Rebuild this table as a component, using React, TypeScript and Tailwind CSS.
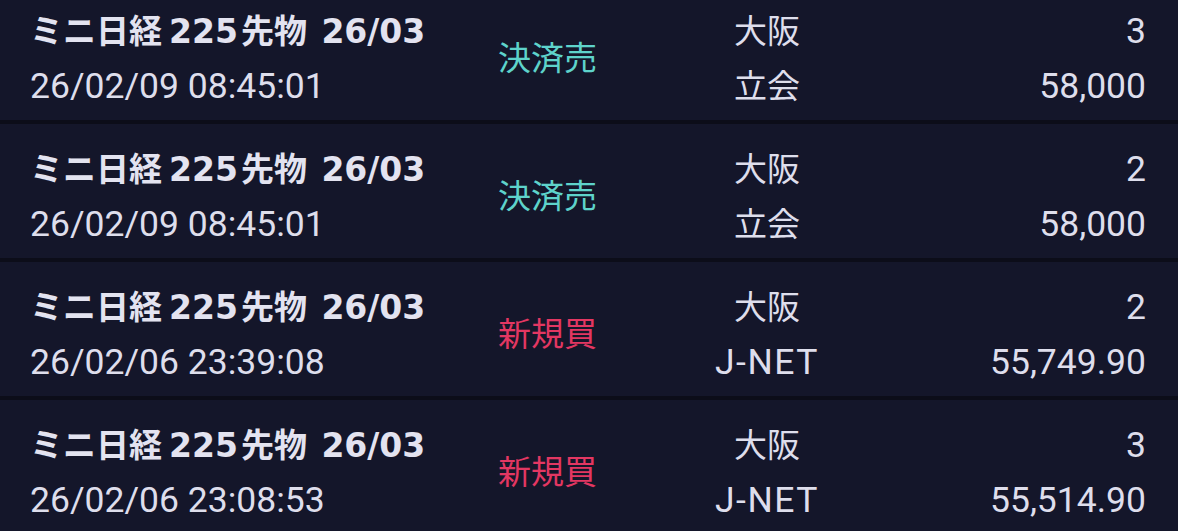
import React from 'react';

type Fill = {
    time: string;
    side: 'close-sell' | 'new-buy';
    market: string;
    session: string;
    qty: string;
    price: string;
};

const fills: Fill[] = [
    { time: '26/02/09 08:45:01', side: 'close-sell', market: '大阪', session: '立会', qty: '3', price: '58,000' },
    { time: '26/02/09 08:45:01', side: 'close-sell', market: '大阪', session: '立会', qty: '2', price: '58,000' },
    { time: '26/02/06 23:39:08', side: 'new-buy', market: '大阪', session: 'J-NET', qty: '2', price: '55,749.90' },
    { time: '26/02/06 23:08:53', side: 'new-buy', market: '大阪', session: 'J-NET', qty: '3', price: '55,514.90' },
];

// 銘柄名: 和文は Noto Sans CJK、数字は幅広の DejaVu Sans
const Title = () => (
    <div className="h-[55px] leading-[55px] font-bold text-[#e3e3f0] whitespace-nowrap">
        <span className="text-[33px]">ミニ日経</span>
        <span className="text-[33px] font-['DejaVu_Sans'] ml-[7px]">225</span>
        <span className="text-[33px] ml-[3px]">先物</span>
        <span className="text-[33px] font-['DejaVu_Sans'] ml-[3px]"> 26/03</span>
    </div>
);

const FillRow: React.FC<{ fill: Fill }> = ({ fill }) => {
    const isSell = fill.side === 'close-sell';
    const latin = /^[\x00-\x7f]+$/.test(fill.session);
    return (
        <div className="flex h-[138px] items-center pt-[11px] pl-[30px] pr-[32px] border-b-4 border-[#0c0d19] bg-[#14162a]">
            {/* 銘柄・日時 */}
            <div className="w-[468px] shrink-0 flex flex-col">
                <Title />
                <div className="h-[55px] leading-[55px] text-[35.5px] text-[#dedeec]">{fill.time}</div>
            </div>

            {/* 売買区分 */}
            <div className={`w-[200px] shrink-0 text-[33px] ${isSell ? 'text-[#5ed3cb]' : 'text-[#e33762]'}`}>
                {isSell ? '決済売' : '新規買'}
            </div>

            {/* 市場 */}
            <div className="w-[138px] shrink-0 flex flex-col items-center text-[33px] text-[#dedeec]">
                <div className="h-[55px] leading-[55px]">{fill.market}</div>
                <div className={latin ? 'h-[55px] leading-[55px] text-[35.5px] tracking-[1.5px]' : 'h-[55px] leading-[55px]'}>
                    {fill.session}
                </div>
            </div>

            {/* 数量・単価 */}
            <div className="flex-1 flex flex-col items-end text-[35.5px] text-[#dedeec]">
                <div className="h-[55px] leading-[55px]">{fill.qty}</div>
                <div className="h-[55px] leading-[55px]">{fill.price}</div>
            </div>
        </div>
    );
};

export default function App() {
    return (
        <div
            className="w-[1178px] h-[531px] overflow-hidden bg-[#14162a]"
            style={{ fontFamily: 'Roboto, "Noto Sans CJK JP", sans-serif' }}
        >
            <div className="-mt-[14px]">
                {fills.map((f, i) => (
                    <FillRow key={i} fill={f} />
                ))}
            </div>
        </div>
    );
}
